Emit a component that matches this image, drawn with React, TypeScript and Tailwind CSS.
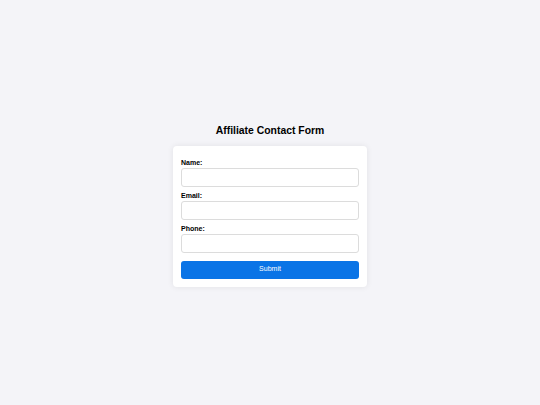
export default function App() {
  return (
    <div className="min-h-screen bg-[#f4f4f8] flex items-center justify-center" style={{ fontFamily: '"Liberation Sans", Arial, sans-serif' }}>
      <div className="flex flex-col items-center">
        <h1 className="mt-[5px] mb-[8px] text-[10.4px] leading-[14px] font-bold text-black">Affiliate Contact Form</h1>
        <form className="w-[194px] bg-white rounded-[4px] shadow-[0_0_6px_rgba(0,0,0,0.08)] px-[8px] pt-[12px] pb-[8px]">
          {['Name:', 'Email:', 'Phone:'].map((l, i) => (
            <div key={l} className={i > 0 ? 'mt-[4px]' : ''}>
              <label className="block text-[7px] leading-[9px] font-bold text-black mb-[1px]">{l}</label>
              <input className="block w-full h-[19px] border border-[#dcdcdc] rounded-[3px] bg-white" />
            </div>
          ))}
          <button type="button" className="mt-[8px] w-full h-[18px] bg-[#0a74e6] text-white text-[7px] rounded-[3px]">Submit</button>
        </form>
      </div>
    </div>
  );
}
